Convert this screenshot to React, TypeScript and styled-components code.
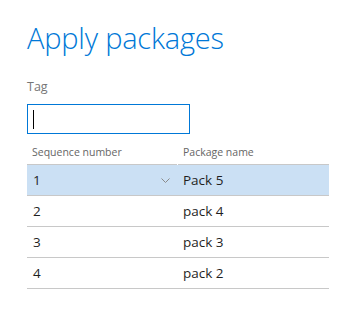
import React from "react";
import styled, { createGlobalStyle } from "styled-components";

const Global = createGlobalStyle`
  html, body { margin: 0; padding: 0; background: #ffffff; }
  body { font-family: "Open Sans", "Noto Sans", "Liberation Sans", sans-serif; }
`;

const Page = styled.div`
  width: 338px;
  height: 313px;
  box-sizing: border-box;
  padding: 18px 9px 0 27px;
  display: flex;
  flex-direction: column;
`;

const Title = styled.h1`
  margin: 0;
  font-weight: 300;
  font-size: 29px;
  line-height: 40px;
  color: #0078d7;
  letter-spacing: -0.2px;
`;

const Label = styled.div`
  margin-top: 20px;
  font-size: 12.5px;
  line-height: 17px;
  color: #767676;
`;

const Field = styled.div`
  margin-top: 9px;
  width: 163px;
  height: 30px;
  box-sizing: border-box;
  border: 1px solid #0078d7;
  display: flex;
  align-items: center;
  padding-left: 5px;
`;

const Caret = styled.span`
  width: 1px;
  height: 19px;
  background: #000000;
`;

const Table = styled.div`
  display: grid;
  grid-template-columns: 151px 151px;
`;

const HeadCell = styled.div<{ $gap?: boolean }>`
  height: 31px;
  box-sizing: border-box;
  padding: 11px 0 0 5px;
  font-size: 10.5px;
  line-height: 14px;
  color: #666666;
  border-bottom: 1px solid #c8c8c8;
  margin-right: ${(p) => (p.$gap ? "1px" : "0")};
`;

const Cell = styled.div<{ $selected?: boolean }>`
  height: 31px;
  box-sizing: border-box;
  padding: 0 8px 0 6px;
  display: flex;
  align-items: center;
  justify-content: space-between;
  font-size: 13.5px;
  color: #1f1f1f;
  background: ${(p) => (p.$selected ? "#cbe0f4" : "#ffffff")};
  border-bottom: 1px solid #c8c8c8;
`;

const NameCell = styled(Cell)`
  padding-left: 5px;
`;

const Chevron = () => (
  <svg width="9" height="5" viewBox="0 0 9 5" fill="none">
    <path d="M0.5 0.5 L4.5 4.5 L8.5 0.5" stroke="#8a8a8a" strokeWidth="1" />
  </svg>
);

const rows = [
  { seq: "1", name: "Pack 5", selected: true },
  { seq: "2", name: "pack 4" },
  { seq: "3", name: "pack 3" },
  { seq: "4", name: "pack 2" },
];

export default function App() {
  return (
    <>
      <Global />
      <Page>
        <Title>Apply packages</Title>
        <Label>Tag</Label>
        <Field>
          <Caret />
        </Field>
        <Table>
          <HeadCell $gap>Sequence number</HeadCell>
          <HeadCell>Package name</HeadCell>
          {rows.map((r) => (
            <React.Fragment key={r.seq}>
              <Cell $selected={r.selected}>
                <span>{r.seq}</span>
                {r.selected && <Chevron />}
              </Cell>
              <NameCell $selected={r.selected}>{r.name}</NameCell>
            </React.Fragment>
          ))}
        </Table>
      </Page>
    </>
  );
}
